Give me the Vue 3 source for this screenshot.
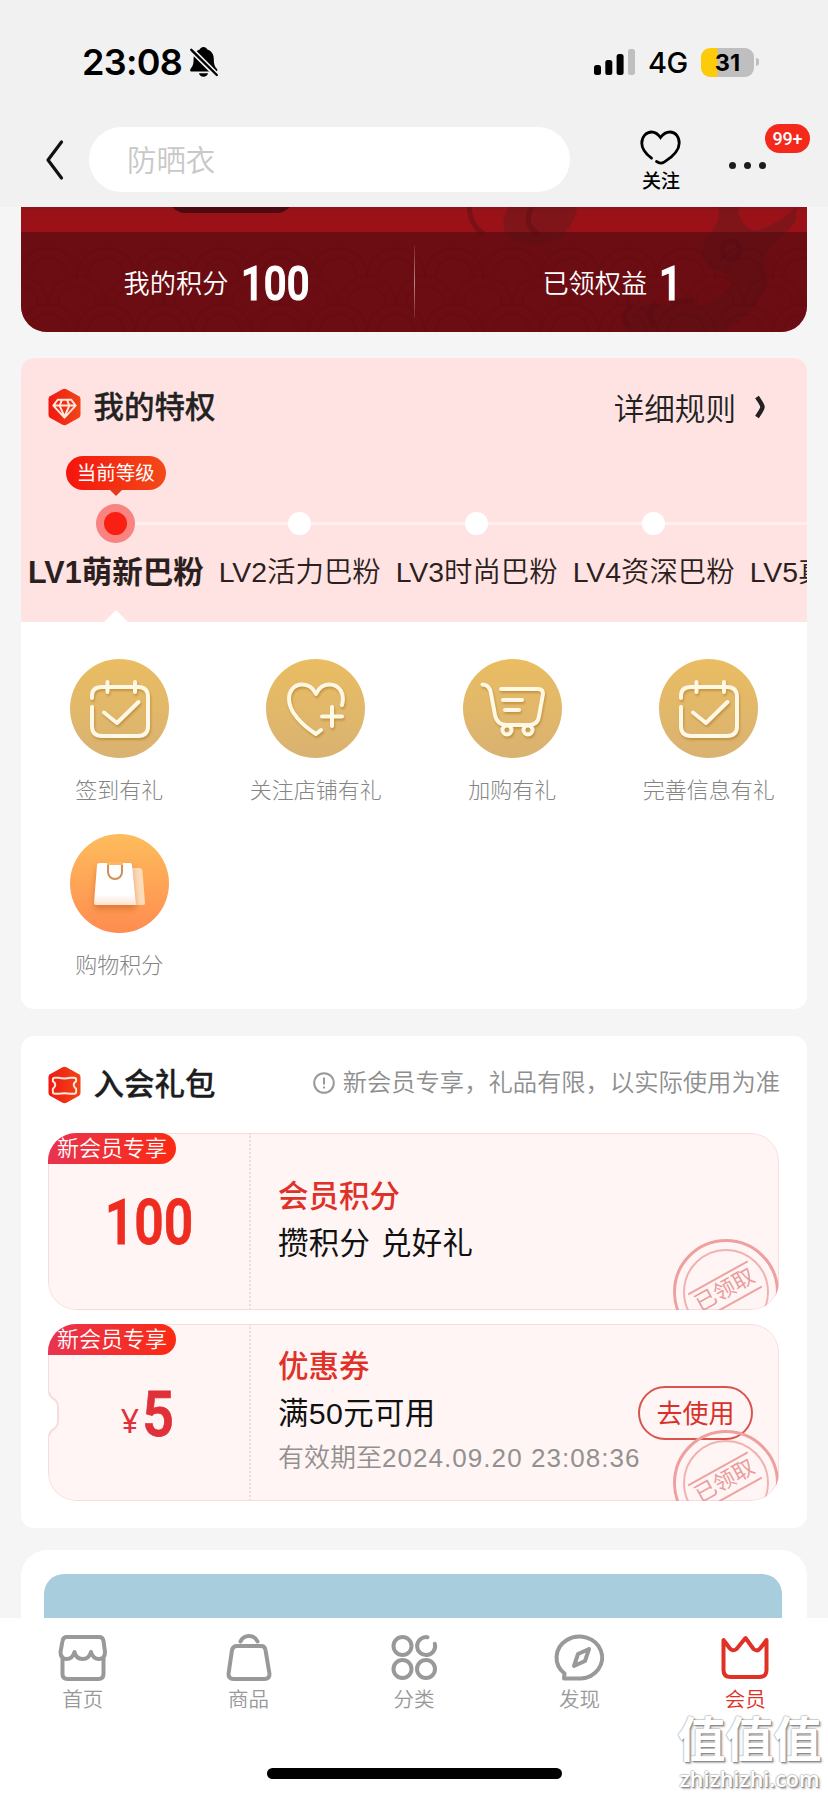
<script setup>
const levels = [
  { code: 'LV1', name: '萌新巴粉', current: true },
  { code: 'LV2', name: '活力巴粉' },
  { code: 'LV3', name: '时尚巴粉' },
  { code: 'LV4', name: '资深巴粉' },
  { code: 'LV5', name: '真爱巴粉' }
]
const perks = [
  { icon: 'calendar', label: '签到有礼' },
  { icon: 'heart', label: '关注店铺有礼' },
  { icon: 'cart', label: '加购有礼' },
  { icon: 'calendar', label: '完善信息有礼' },
  { icon: 'bag', label: '购物积分' }
]
const coupons = [
  { amount: '100', title: '会员积分', desc: '攒积分 兑好礼' },
  { unit: '¥', amount: '5', title: '优惠券', desc: '满50元可用', expiry: '有效期至', until: '2024.09.20 23:08:36', action: '去使用' }
]
const tabs = [
  { icon: 'home', label: '首页' },
  { icon: 'goods', label: '商品' },
  { icon: 'category', label: '分类' },
  { icon: 'discover', label: '发现' },
  { icon: 'member', label: '会员', active: true }
]
</script>

<template>
  <div class="phone">
    <div class="status">
      <span class="time">23:08</span>
      <svg class="bell" viewBox="0 0 28 30">
        <path d="M13.500 0c1.800 0 3.200 1 3.500 2.200 4.500 1.600 6.800 5 6.800 9.600 0 6 1 7.800 3.200 10.200.8 1.200.3 2.600-1 2.600H1.700c-1.500 0-2-1.500-1.200-2.700C2.600 19.600 3.600 17.600 3.600 11.800c0-4.600 2.200-8 6.400-9.600C10.400 1 11.700 0 13.500 0zM9 26.200h9c-.4 2.200-2.200 3.600-4.500 3.600S9.400 28.400 9 26.200z" />
        <path d="M1 2.500 27 28.500" stroke="#f1f1f1" stroke-width="5.600" />
        <path d="M1.300 2.800 26.800 28" stroke="#000" stroke-width="2.400" stroke-linecap="round" />
      </svg>
      <svg class="signal" viewBox="0 0 42 28">
        <rect x="0" y="17" width="7" height="10" rx="2.500" />
        <rect x="11.300" y="12" width="7" height="15" rx="2.500" />
        <rect x="22.600" y="6" width="7" height="21" rx="2.500" />
        <rect x="34" y="1" width="7" height="26" rx="2.500" fill="#bfbfbf" />
      </svg>
      <span class="net">4G</span>
      <div class="battery"><span>31</span></div>
      <i class="tip"></i>
    </div>

    <div class="nav">
      <svg class="back" viewBox="0 0 20 44"><path d="M16.500 4 3 22l13.500 18" /></svg>
      <div class="search">防晒衣</div>
      <div class="follow">
        <svg viewBox="0 0 42 35"><path d="M11.500 28.200C6 24 1.800 19.500 1.800 13.200 1.800 6.500 6.200 2 11.600 2c3.600 0 6.200 1.800 8.900 5.500C23.200 3.800 26.400 2 30 2c5.400 0 9.200 4.600 9.200 11.200 0 7.800-7 13.800-14.700 18.700-3.200 2-4.800 1.600-8 -.4" /></svg>
        <span>关注</span>
      </div>
      <div class="more"><i></i><i></i><i></i><b>99+</b></div>
    </div>

    <div class="hero">
      <svg class="pattern" viewBox="0 0 786 125">
        <g fill="none" stroke="#420a10" stroke-opacity=".12" stroke-width="2">
          <path v-for="n in 14" :key="'a' + n" :d="`M${n * 58 - 60} 70a29 29 0 0 1 58 0m-48 0a19 19 0 0 1 38 0`" />
          <path v-for="n in 14" :key="'b' + n" :d="`M${n * 58 - 89} 98a29 29 0 0 1 58 0m-48 0a19 19 0 0 1 38 0`" />
          <path v-for="n in 14" :key="'c' + n" :d="`M${n * 58 - 60} 126a29 29 0 0 1 58 0m-48 0a19 19 0 0 1 38 0`" />
        </g>
        <g fill="#3b1d19" opacity=".28">
          <path d="M488 0h68c-4 26-24 41-52 37-20-3-28-20-16-37z" />
          <path d="M682 40c4-18 20-20 15-40h20c1 15 8 21 18 24 14-5 26-10 40-24v14c-17 22-28 24-32 39 10 22-3 47-28 64l-15 8h-94c-2-17 10-26 25-28 20-2 40 10 64-6 20-12 18-20 6-26-14-5-24-10-19-25z" />
        </g>
        <g fill="none" stroke="#5c0d16" stroke-opacity=".5" stroke-width="5">
          <path d="M448 0q2 20 15 27M511 0q-10 18 7 27M612 98q-14 9-5 21M636 96q-14 11-3 22M650 96q15-3 23-2" />
          <circle cx="710" cy="43" r="9" />
        </g>
      </svg>
      <i class="pill"></i>
      <div class="stats">
        <div>我的积分<b>100</b></div>
        <i></i>
        <div>已领权益<b class="one">1</b></div>
      </div>
    </div>

    <section class="panel privileges">
      <div class="levels">
        <div class="head">
          <svg class="hex" viewBox="0 0 34 38">
            <defs><linearGradient id="hexA" x1="0" x2="1"><stop stop-color="#f01812" /><stop offset="1" stop-color="#f04618" /></linearGradient></defs>
            <path fill="url(#hexA)" d="M15 .8q2-1 4 0l13 7.200q1.500 1 1.500 3v16q0 2-1.500 3l-13 7.200q-2 1-4 0L2 30Q.5 29 .5 27V11Q.5 9 2 8z" />
            <path fill="none" stroke="#ffe9dc" stroke-width="2" stroke-linejoin="round" d="m10 11.500h14l4.500 6L17 30 5.500 17.500zM6 17.500h22M12 17.500 17 29l5-11.500-2.500-6M12 17.500l2.500-6" />
          </svg>
          <h2>我的特权</h2>
          <span class="rules">详细规则</span>
          <svg class="chev" viewBox="0 0 12 26"><path d="M3 3q5.500 8 5.500 10T3 23" /></svg>
        </div>
        <div class="track">
          <div v-for="l in levels" :key="l.code" class="level" :class="{ current: l.current }">
            <div class="slot"><span v-if="l.current" class="bubble">当前等级</span></div>
            <div class="node"><i></i></div>
            <div class="lname">{{ l.code }}{{ l.name }}</div>
            <i v-if="l.current" class="arrow"></i>
          </div>
        </div>
      </div>
      <div class="perks">
        <div v-for="p in perks" :key="p.label" class="perk">
          <div class="disc" :class="p.icon">
            <svg viewBox="0 0 99 99">
              <g v-if="p.icon === 'calendar'" class="line">
                <path d="M22 39v-2q0-9 10-9h36q10 0 10 10v29q0 10-10 10H32q-10 0-10-10V48M37.500 23v10M65 23v10M34 53.500l13 10.500 21.500-21" />
              </g>
              <g v-else-if="p.icon === 'heart'" class="line">
                <path d="M76 46c3-11-2-20.500-13-20.500-6 0-10 3-13 9.500-3-6.500-8-9.500-14-9.500-8 0-13 6.500-13 14.500 0 13 13 26 27 35l5-4M66 48v19M56 57.500h20" />
              </g>
              <g v-else-if="p.icon === 'cart'" class="line">
                <path d="M19.500 25.500q7 0 8.500 9l4 21.500q2 10 12 10h22q9 0 10-9l4-22q0-5-5-5H38M40 41h19M42 51h14" />
                <circle cx="44" cy="71" r="4.500" /><circle cx="65" cy="71" r="4.500" />
              </g>
              <g v-else>
                <defs><linearGradient id="bagG" x1="0" x2="0" y1="0" y2="1"><stop offset=".75" stop-color="#fff" /><stop offset="1" stop-color="#ffe3cf" /></linearGradient></defs>
                <path d="M60 34h9q3 0 3.500 3L75 69q0 2-2 2H60z" fill="#ffdcb9" />
                <path class="bagbody" d="M30 29h30q2 0 2 2l4 40H26q-2 0-2-2l3-38q0-2 3-2z" fill="url(#bagG)" />
                <path d="M38 29v9a7 7 0 0 0 14 0v-9" fill="#fff" stroke="#cf9055" stroke-width="2" />
                <path d="M37 28h16v3H37z" fill="#ffb661" />
              </g>
            </svg>
          </div>
          <span>{{ p.label }}</span>
        </div>
      </div>
    </section>

    <section class="panel gifts">
      <div class="head">
        <svg class="hex" viewBox="0 0 34 38">
          <path fill="url(#hexA)" d="M15 .8q2-1 4 0l13 7.200q1.500 1 1.500 3v16q0 2-1.500 3l-13 7.200q-2 1-4 0L2 30Q.5 29 .5 27V11Q.5 9 2 8z" />
          <path fill="none" stroke="#ffe9dc" stroke-width="2" stroke-linejoin="round" d="M7 11.500h4q6 1.500 12 0h4q2 0 2 2v1.500q-5 4 0 8v3q0 2-2 2h-4q-6-1-12 0H7q-2 0-2-2v-3q5-4 0-8v-1.500q0-2 2-2z" />
        </svg>
        <h2>入会礼包</h2>
        <svg class="info" viewBox="0 0 22 22"><circle cx="11" cy="11" r="9.800" /><path d="M11 5.500v7M11 14.500v2" /></svg>
        <span class="note">新会员专享，礼品有限，以实际使用为准</span>
      </div>
      <div v-for="c in coupons" :key="c.title" class="coupon">
        <span class="tag">新会员专享</span>
        <div class="value" :class="{ money: c.unit }"><small v-if="c.unit">{{ c.unit }}</small><b>{{ c.amount }}</b></div>
        <div class="detail">
          <h3>{{ c.title }}</h3>
          <p>{{ c.desc }}</p>
          <p v-if="c.expiry" class="expiry">{{ c.expiry }}<span>{{ c.until }}</span></p>
        </div>
        <div v-if="c.action" class="use">{{ c.action }}</div>
        <svg v-if="c.action" class="notch" viewBox="0 0 12 44"><path d="M-1 0h2q1 5 5 7 4 3 4 8v14q0 5-4 8-4 2-5 7h-2z" fill="#fff" /><path d="M1 0q1 5 5 7 4 3 4 8v14q0 5-4 8-4 2-5 7" fill="none" stroke="#f7dcdc" stroke-width="2" /></svg>
        <div class="stamp"><div class="ring"></div><span>已领取</span></div>
      </div>
    </section>

    <section class="panel promo"><div></div></section>

    <nav class="tabs">
      <div v-for="t in tabs" :key="t.label" class="tab" :class="{ active: t.active }">
        <svg viewBox="0 0 50 48">
          <g v-if="t.icon === 'home'">
            <path d="M9 3h32q4 0 4.500 4L47 18q0 7-6 7-6 0-8-7-2 7-8.500 7t-8-7q-2 7-8 7-6 0-6-7L4.500 7Q5 3 9 3zM4.500 23v17q0 5 5 5h31q5 0 5-5V23" />
          </g>
          <g v-else-if="t.icon === 'goods'">
            <path d="M14 12h24q4 0 4.500 4l4 24q0 5-5 5h-31q-5 0-5-5l3.500-24q1-4 5-4zM17.500 7.500q2.500-5.500 8.500-5.500t8.500 5.500" />
          </g>
          <g v-else-if="t.icon === 'category'">
            <circle cx="13.500" cy="12" r="9" /><circle cx="13.500" cy="35" r="9" /><circle cx="37" cy="35" r="9" />
            <path d="M38.500 3.200a9 9 0 1 0 7.300 6.500" />
          </g>
          <g v-else-if="t.icon === 'discover'">
            <path d="M9 44.500l.5-5A22.800 21 0 1 1 26 44.500zM34 15l-11 5-4 12 11-5z" />
          </g>
          <g v-else>
            <path d="M3.500 6v30q0 7 7 7h29q7 0 7-7V6l-6 8q-3 4-7 1L25.500 4l-9 11q-4 3-7-1z" />
          </g>
        </svg>
        <span>{{ t.label }}</span>
      </div>
    </nav>
    <div class="homebar"></div>
    <div class="mark"><b>值值值</b><span>zhizhizhi.com</span></div>
  </div>
</template>

<style>
body { margin: 0; background: #f5f5f5; }
</style>

<style scoped>
* { box-sizing: border-box; }
.phone { position: relative; width: 828px; height: 1796px; overflow: hidden; display: flex; flex-direction: column; background: #f5f5f5; font-family: "Liberation Sans", "Noto Sans CJK SC", sans-serif; color: #222; }
svg { display: block; flex: none; overflow: visible; }
h2, h3, p { margin: 0; }

.status { height: 124px; background: #f1f1f1; display: flex; align-items: center; padding: 0 69px 0 82px; flex: none; font-family: Inter, sans-serif; color: #000; }
.time { width: 108px; font-size: 36px; font-weight: 600; letter-spacing: -.7px; white-space: nowrap; }
.bell { width: 28px; height: 30px; }
.signal { width: 42px; height: 28px; margin-left: 376px; }
.net { font-size: 29px; font-weight: 500; margin-left: 12px; width: 53px; line-height: 30px; padding-top: 2px; letter-spacing: -.5px; }
.battery { width: 53px; height: 29px; border-radius: 9px; background: linear-gradient(90deg, #fdcb0a 0 16px, #bfbfbf 17px); font-weight: 700; font-size: 23.500px; line-height: 30px; text-align: center; }
.tip { width: 3px; height: 8px; margin-left: 2px; border-radius: 0 4px 4px 0; background: #bfbfbf; }

.nav { height: 83px; flex: none; background: #f1f1f1; display: flex; }
.back { width: 20px; height: 44px; margin: 14px 24px 0 45px; fill: none; stroke: #111; stroke-width: 3.200; stroke-linecap: round; stroke-linejoin: round; }
.search { width: 481px; height: 65px; margin-top: 3px; border-radius: 33px; background: #fff; padding-left: 38px; font-size: 29.400px; line-height: 68px; color: #c8c8c8; font-weight: 350; }
.follow { width: 42px; margin: 6px 0 0 70px; color: #000; display: flex; flex-direction: column; align-items: center; }
.follow svg { width: 42px; height: 35px; fill: none; stroke: #000; stroke-width: 2.800; stroke-linecap: round; }
.follow span { font-size: 19px; line-height: 24px; margin-top: 5px; font-weight: 500; white-space: nowrap; }
.more { position: relative; display: flex; gap: 8px; margin: 38px 0 0 47px; }
.more i { width: 7px; height: 7px; border-radius: 50%; background: #1c1c1c; }
.more b { position: absolute; left: 36px; top: -38px; width: 45px; height: 29px; border-radius: 15px; background: #f5281c; color: #fff; font: 500 18px/29px Roboto, sans-serif; text-align: center; letter-spacing: -.2px; }

.hero { position: relative; height: 125px; margin: 0 21px; flex: none; border-radius: 0 0 26px 26px; overflow: hidden; background: linear-gradient(#8c121a, #9a1218 6px); display: flex; flex-direction: column; justify-content: flex-end; }
.pattern { position: absolute; inset: 0; width: 786px; height: 125px; }
.pill { position: absolute; left: 148px; top: -26px; width: 124px; height: 32px; border-radius: 16px; background: #4a0a10; }
.stats { position: relative; height: 100px; background: rgba(84, 10, 17, .66); display: flex; align-items: center; color: #fff; font-size: 26.200px; font-weight: 350; }
.stats div { flex: 1; display: flex; align-items: center; justify-content: center; line-height: 40px; padding-top: 3px; }
.stats b { font: 500 49px/50px Roboto, sans-serif; display: inline-block; transform: scaleX(.82); transform-origin: left; margin: 0 -14px 0 13px; -webkit-text-stroke: 1.200px #fff; }
.stats b.one { margin: 0 -8px 0 12px; }
.stats > i { width: 1px; height: 72px; background: linear-gradient(rgba(255,255,255,.1), rgba(255,255,255,.5), rgba(255,255,255,.1)); }

.panel { flex: none; margin: 25px 21px 0; border-radius: 13px; background: #fff; overflow: hidden; }
.privileges { margin-top: 26px; }
.head { height: 98px; display: flex; align-items: center; padding-left: 27px; }
.hex { width: 33px; height: 38px; }
h2 { font-size: 30.500px; line-height: 40px; font-weight: 500; margin-left: 12.500px; -webkit-text-stroke: .3px currentColor; }
.levels { height: 264px; background: #ffe3e2; }
.rules { margin-left: auto; font-size: 30.600px; line-height: 40px; padding-top: 3px; font-weight: 350; }
.chev { width: 12px; height: 26px; margin: 0 41px 0 18px; fill: none; stroke: #222; stroke-width: 4.500; }
.track { position: relative; display: flex; gap: 15px; padding-left: 7px; width: 1000px; }
.track::before { content: ""; position: absolute; left: 96px; right: 0; top: 66px; height: 3px; background: #fff0ef; }
.level { flex: none; position: relative; height: 166px; display: flex; flex-direction: column; align-items: center; }
.slot { height: 48px; }
.bubble { position: relative; display: block; width: 100px; height: 34px; border-radius: 17px; background: linear-gradient(90deg, #f5150c, #f24a18); color: #fff; font-size: 19.500px; line-height: 34px; text-align: center; }
.bubble::after { content: ""; position: absolute; left: 43px; top: 33px; border: 7px solid transparent; border-top-color: #e23a1c; border-bottom: 0; }
.node { height: 39px; display: flex; align-items: center; }
.node i { width: 23px; height: 23px; border-radius: 50%; background: #fff; }
.current .node i { width: 39px; height: 39px; background: #f91f12; border: 8.500px solid #f88380; }
.lname { height: 56px; line-height: 58px; font-size: 28.400px; white-space: nowrap; color: #2b1f20; font-weight: 350; }
.current .lname { font-size: 30.500px; font-weight: 700; }
.arrow { position: absolute; bottom: 0; border: 12px solid transparent; border-bottom-color: #fff; border-top: 0; }

.perks { display: grid; grid-template-columns: repeat(4, 1fr); grid-auto-rows: 175px; height: 387px; padding-top: 37px; }
.perk { display: flex; flex-direction: column; align-items: center; font-size: 22px; color: #858585; font-weight: 300; white-space: nowrap; }
.perk span { margin-top: 14px; line-height: 37px; }
.disc { width: 99px; height: 99px; border-radius: 50%; background: linear-gradient(#eabd62, #d9b271); }
.disc.bag { background: linear-gradient(#fdbd5c, #ff8c50); }
.line { fill: none; stroke: #fff8e4; stroke-width: 4; stroke-linecap: round; stroke-linejoin: round; filter: drop-shadow(1px 2px 1px rgba(160, 105, 25, .45)); }
.bagbody { filter: drop-shadow(0 4px 3px rgba(190, 85, 20, .5)); }

.gifts { margin-top: 27px; height: 492px; }
.gifts .head { height: 97px; }
.gifts h2 { color: #1d1d1f; margin-top: -2px; }
.info { width: 22px; height: 22px; margin: -3px 8px 0 auto; fill: none; stroke: #999; stroke-width: 2; }
.note { font-size: 24.300px; line-height: 36px; margin: -4px 27px 0 0; color: #8e8e8e; font-weight: 350; white-space: nowrap; }
.coupon { position: relative; display: flex; margin: 0 27px 14px; width: 731px; height: 177px; border-radius: 28px; background: #fff5f5; overflow: hidden; }
.coupon::before { content: ""; position: absolute; inset: 0; border: 1.500px solid #f8dcdd; border-radius: 28px; }
.tag { position: absolute; left: 0; top: 0; width: 128px; height: 31px; border-radius: 18px 16px 16px 0; background: linear-gradient(90deg, #e83450, #fb2a12); color: #fff; font-size: 22px; line-height: 31px; text-align: center; font-weight: 350; }
.value { width: 203px; border-right: 2px dotted #ecdcdd; display: flex; align-items: center; justify-content: center; color: #ee2c20; padding-top: 2px; }
.value b { font: 600 63px/70px Roboto, sans-serif; transform: scaleX(.82); -webkit-text-stroke: .8px currentColor; }
.value small { font: 400 32px/40px "Noto Sans", sans-serif; margin-top: 13px; color: #e03038; }
.value.money b { color: #e03038; margin-left: 1px; transform: scaleX(.88); }
.value.money { padding-top: 4px; }
.detail { padding: 39px 0 0 27px; }
h3 { font-size: 30.500px; line-height: 48px; font-weight: 500; color: #df3128; }
p { font-size: 30.400px; line-height: 47px; color: #111; white-space: nowrap; letter-spacing: .35px; word-spacing: 2px; }
.money + .detail { padding-top: 18px; }
p.expiry { font-size: 26px; line-height: 43px; letter-spacing: 0; word-spacing: 0; color: #939090; font-weight: 350; }
.expiry span { letter-spacing: 1.050px; }
.use { position: absolute; left: 590px; top: 62px; width: 115px; height: 54px; border: 2px solid #d9544f; border-radius: 27px; color: #d9302a; font-size: 26px; line-height: 52px; text-align: center; }
.notch { position: absolute; left: 0; top: 68px; width: 12px; height: 44px; }
.stamp { position: absolute; left: 625px; top: 106px; width: 106px; height: 106px; border: 3px solid #eda09e; border-radius: 50%; display: flex; align-items: center; justify-content: center; }
.ring { position: absolute; inset: 7px; border: 2px solid #f0b2b1; border-radius: 50%; }
.stamp span { position: relative; width: 68px; text-align: center; font-size: 21.500px; line-height: 27px; color: #e99c9b; border: solid #eda3a2; border-width: 2px 0; transform: translate(-1px, -2px) rotate(-29deg); white-space: nowrap; }

.promo { margin-top: 22px; height: 68px; border-radius: 26px 26px 0 0; padding: 24px 25px 0 23px; }
.promo div { height: 44px; border-radius: 20px 20px 0 0; background: #a8cddc; }

.tabs { flex: none; height: 178px; background: #fff; display: flex; padding-top: 16px; }
.tab { flex: 1; display: flex; flex-direction: column; align-items: center; color: #999; font-size: 20.500px; font-weight: 350; }
.tab svg { width: 50px; height: 48px; fill: none; stroke: currentColor; stroke-width: 4; stroke-linejoin: round; stroke-linecap: round; }
.tab span { margin-top: 3px; line-height: 30px; }
.tab.active { color: #e03127; }
.homebar { position: absolute; left: 267px; bottom: 17px; width: 295px; height: 11px; border-radius: 6px; background: #000; }
.mark { position: absolute; right: 7px; bottom: 4px; width: 143px; display: flex; flex-direction: column; align-items: center; color: #fff; text-shadow: 1px 1px 1px #888, 2px 2px 2px #bbb, -1px 0 1px #ccc, 0 -1px 1px #ccc; white-space: nowrap; }
.mark b { font-size: 48px; line-height: 49px; }
.mark span { font: 600 21.500px/27px "Open Sans", sans-serif; }
</style>
